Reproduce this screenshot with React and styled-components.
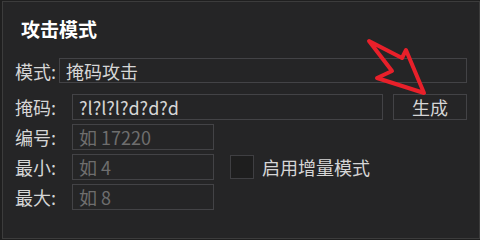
import React from 'react';
import styled, { createGlobalStyle } from 'styled-components';

const GlobalStyle = createGlobalStyle`
  html, body {
    margin: 0;
    padding: 0;
    background: #1f1f1f;
  }
  body {
    font-family: "Noto Sans CJK SC", "Noto Sans", sans-serif;
  }
`;

const Panel = styled.div`
  position: relative;
  box-sizing: border-box;
  width: 478px;
  height: 238px;
  margin: 1px 0 0 2px;
  border: 1px solid #3c3c3c;
  background: #252526;
  padding: 0 12px 0 12px;
  overflow: hidden;
`;

const Title = styled.h2`
  margin: 0;
  padding: 14px 0 0 6px;
  height: 56px;
  box-sizing: border-box;
  font-size: 19px;
  font-weight: 700;
  line-height: 26px;
  color: #ffffff;
`;

const ModeRow = styled.div`
  display: flex;
  align-items: center;
  gap: 3px;
  height: 25px;
  margin-bottom: 11px;
`;

const Form = styled.div`
  display: grid;
  grid-template-columns: 57px 142px 16px 1fr;
  grid-auto-rows: 26px;
  row-gap: 4px;
  align-items: center;
`;

const Label = styled.span`
  font-size: 18px;
  line-height: 26px;
  color: #d6d6d6;
  white-space: nowrap;
`;

const Field = styled.div`
  box-sizing: border-box;
  height: ${p => (p.$h ? p.$h : 26)}px;
  border: 1px solid #434346;
  background: #252526;
  padding: 0 6px;
  display: flex;
  align-items: center;
  font-size: 18px;
  color: ${p => (p.$placeholder ? '#6e6e6e' : '#d6d6d6')};
  white-space: nowrap;
  overflow: hidden;
  ${p => p.$grow && 'flex: 1;'}
`;

const MaskCell = styled.div`
  grid-column: 2 / 5;
  display: flex;
  gap: 10px;
`;

const Button = styled.button`
  box-sizing: border-box;
  width: 74px;
  height: 26px;
  border: 1px solid #434346;
  background: #252526;
  color: #d6d6d6;
  font-family: inherit;
  font-size: 18px;
  padding: 0;
  line-height: 24px;
`;

const CheckLabel = styled.label`
  grid-column: 4;
  display: flex;
  align-items: center;
  gap: 8px;
  font-size: 18px;
  color: #d6d6d6;
`;

const Box = styled.span`
  box-sizing: border-box;
  width: 24px;
  height: 24px;
  border: 1px solid #3f3f42;
  background: #1e1e1e;
`;

const Arrow = styled.svg`
  position: absolute;
  left: -3px;
  top: -2px;
  pointer-events: none;
`;

export default function App() {
  return (
    <>
      <GlobalStyle />
      <Panel>
        <Title>攻击模式</Title>
        <ModeRow>
          <Label>模式:</Label>
          <Field $grow $h={25}>掩码攻击</Field>
        </ModeRow>
        <Form>
          <Label>掩码:</Label>
          <MaskCell>
            <Field $grow>?l?l?l?d?d?d</Field>
            <Button>生成</Button>
          </MaskCell>
          <Label>编号:</Label>
          <Field $placeholder>如 17220</Field>
          <span />
          <span />
          <Label>最小:</Label>
          <Field $placeholder>如 4</Field>
          <span />
          <CheckLabel>
            <Box />
            启用增量模式
          </CheckLabel>
          <Label>最大:</Label>
          <Field $placeholder>如 8</Field>
        </Form>
        <Arrow width="480" height="240" viewBox="0 0 480 240">
          <polygon
            points="369,41 402,58 406,50 424,93 377,78 392,71"
            fill="none"
            stroke="#e8202a"
            strokeWidth="4"
            strokeLinejoin="round"
          />
        </Arrow>
      </Panel>
    </>
  );
}
